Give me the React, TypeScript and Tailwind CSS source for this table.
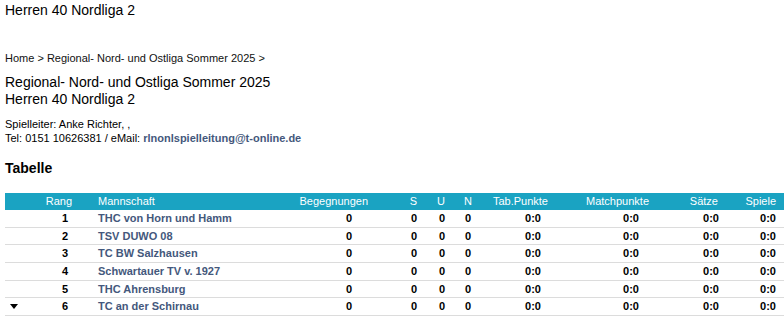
import React from "react";

const teams = [
  "THC von Horn und Hamm",
  "TSV DUWO 08",
  "TC BW Salzhausen",
  "Schwartauer TV v. 1927",
  "THC Ahrensburg",
  "TC an der Schirnau",
];

export default function App() {
  return (
    <div
      className="w-[784px] h-[328px] overflow-hidden bg-white text-black pl-[5px]"
      style={{ fontFamily: '"Liberation Sans", Arial, sans-serif' }}
    >
      <div className="text-[14px] leading-[20px]">Herren 40 Nordliga 2</div>
      <div className="mt-[31px] text-[11px] leading-[14px] text-[#111]">
        Home &gt; Regional- Nord- und Ostliga Sommer 2025 &gt;
      </div>
      <div className="mt-[9px] text-[14px] leading-[17px]">
        <div>Regional- Nord- und Ostliga Sommer 2025</div>
        <div>Herren 40 Nordliga 2</div>
      </div>
      <div className="mt-[9px] text-[11px] leading-[14px]">
        <div>Spielleiter: Anke Richter, ,</div>
        <div>
          Tel: 0151 10626381 / eMail:{" "}
          <span className="font-bold text-[#44587c]">rlnonlspielleitung@t-online.de</span>
        </div>
      </div>
      <div className="mt-[15px] text-[14px] leading-[17px] font-bold">Tabelle</div>
      <div className="mt-[16px] w-[779px] text-[11px]">
        <div className="flex h-[17px] items-center bg-[#1aa3c2] text-white">
          <div className="w-[35px]"></div>
          <div className="w-[40px] pr-[8px] text-right">Rang</div>
          <div className="w-[210px] pl-[18px]">Mannschaft</div>
          <div className="w-[85px] pr-[7px] text-right">Begegnungen</div>
          <div className="w-[50px] pr-[8px] text-right">S</div>
          <div className="w-[27px] pr-[7px] text-right">U</div>
          <div className="w-[28px] pr-[8px] text-right">N</div>
          <div className="w-[75px] pr-[7px] text-right">Tab.Punkte</div>
          <div className="w-[100px] pr-[6px] text-right">Matchpunkte</div>
          <div className="w-[70px] pr-[7px] text-right">Sätze</div>
          <div className="w-[59px] pr-[8px] text-right">Spiele</div>
        </div>
        {teams.map((t, i) => (
          <div
            key={t}
            className="flex h-[17.67px] items-center border-b border-[#dcdcdc] font-bold"
          >
            <div className="w-[35px] pl-[5px] flex items-center">
              {i === 5 && (
                <svg width="8" height="5" viewBox="0 0 8 5">
                  <polygon points="0,0 8,0 4,5" fill="#000" />
                </svg>
              )}
            </div>
            <div className="w-[40px] pr-[12px] text-right">{i + 1}</div>
            <div className="w-[210px] pl-[18px] text-[#44587c]">{t}</div>
            <div className="w-[85px] pr-[23px] text-right">0</div>
            <div className="w-[50px] pr-[8px] text-right">0</div>
            <div className="w-[27px] pr-[7px] text-right">0</div>
            <div className="w-[28px] pr-[9px] text-right">0</div>
            <div className="w-[75px] pr-[14px] text-right">0:0</div>
            <div className="w-[100px] pr-[16px] text-right">0:0</div>
            <div className="w-[70px] pr-[6px] text-right">0:0</div>
            <div className="w-[59px] pr-[8px] text-right">0:0</div>
          </div>
        ))}
      </div>
    </div>
  );
}
